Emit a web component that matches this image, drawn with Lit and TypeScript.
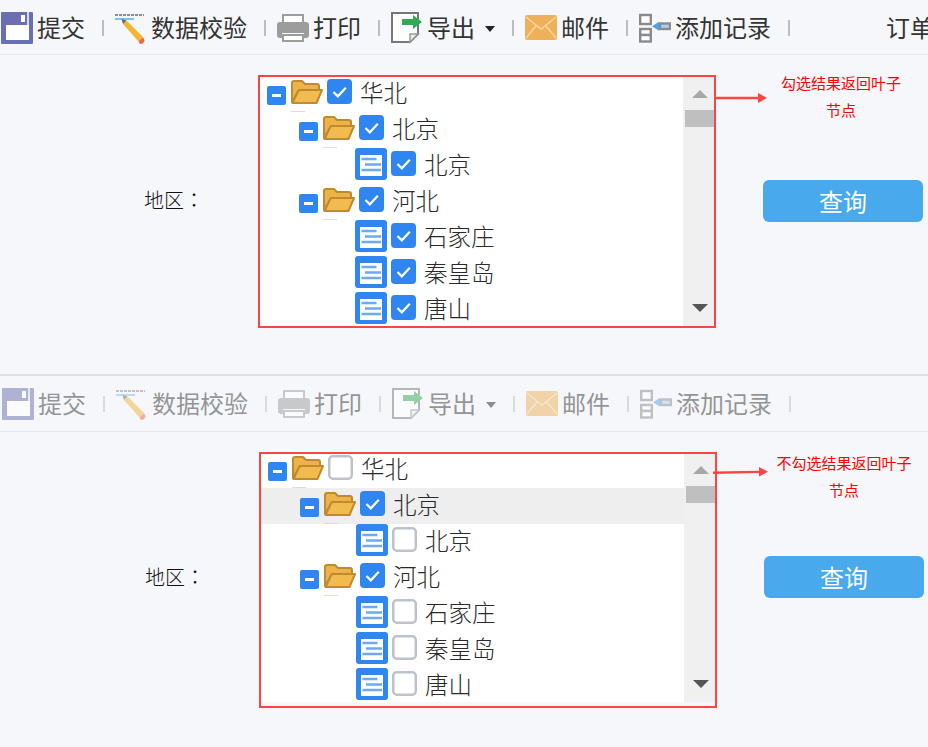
import { LitElement, html, css, svg } from "lit";
import { customElement, property } from "lit/decorators.js";

@customElement("app-root")
export class AppRoot extends LitElement {
  static styles = css`
    :host { display: block; width: 928px; height: 747px; overflow: hidden; background: #f6f7fa; font-family: "Noto Sans CJK SC", sans-serif; }
  `;
  render() {
    return html`<demo-panel variant="first"></demo-panel><demo-panel variant="second"></demo-panel>`;
  }
}

type Row = { level: number; text: string; leaf?: boolean; checked: boolean; hot?: boolean };

@customElement("demo-panel")
export class DemoPanel extends LitElement {
  @property({ reflect: true }) variant = "first";

  static styles = css`
    :host { display: block; position: relative; font-family: "Noto Sans CJK SC", sans-serif; }
    :host([variant="first"]) { height: 374px; border-bottom: 2px solid #dedfe1; }
    :host([variant="second"]) { height: 371px; }

    .toolbar { display: flex; align-items: flex-start; height: 54px; padding-left: 1px; overflow: hidden; border-bottom: 1px solid #e6e7e9; white-space: nowrap; font-size: 24px; color: #333; }
    :host([variant="second"]) .toolbar { height: 55px; padding-left: 2px; }
    .tool { display: flex; align-items: flex-start; padding-top: 12px; }
    :host([variant="second"]) .tool > *, :host([variant="second"]) .sep { opacity: 0.5; }
    .tool span { margin-left: 4px; line-height: 30px; height: 32px; }
    .tool svg { display: block; flex: none; }
    .mail { margin-top: 3px; }
    .caret { width: 0; height: 0; margin: 14px 0.5px 0 9.5px; border-left: 5.5px solid transparent; border-right: 5.5px solid transparent; border-top: 6px solid #222; }
    .sep { width: 2px; height: 16px; margin: 20px 11px 0 17px; background: #bdbdbd; flex: none; }
    .order { margin: 11px 0 0 85px; line-height: 32px; color: #333; }

    .body { display: flex; align-items: flex-start; padding: 21px 0 0 144px; }
    :host([variant="second"]) .body { padding: 20px 0 0 145px; }
    .label { width: 115px; margin-top: 108px; font-family: "Noto Sans CJK TC", sans-serif; font-size: 20px; line-height: 32px; color: #111; font-weight: 300; }
    :host([variant="second"]) .label { margin-top: 109px; }

    .tree { position: relative; width: 456px; height: 250px; display: flex; background: #fff; flex: none; }
    .frame { position: absolute; left: -1px; right: -1px; top: -1px; bottom: -2px; border: 2px solid #fb4444; pointer-events: none; }
    :host([variant="second"]) .frame { top: 0; bottom: -6px; }
    .rows { flex: 1; min-width: 0; overflow: hidden; }
    .row { display: flex; align-items: flex-start; height: 36px; box-sizing: border-box; padding-left: 8px; position: relative; }
    .row.hot { background: #eee; }
    .row.l1 { padding-left: 40px; }
    .row.l2 { padding-left: 96px; }
    .exp { width: 19px; height: 19px; margin: 10px 5px 0 0; border-radius: 2px; background: #2f86f0; position: relative; flex: none; }
    .exp::after { content: ""; position: absolute; left: 5px; right: 5px; top: 8px; height: 3px; background: #fff; }
    .folder { display: block; width: 32px; height: 24px; margin-top: 4px; flex: none; }
    .tick { position: absolute; top: 35px; width: 14px; height: 1px; background: #e6dccd; }
    .box { width: 25px; height: 25px; margin: 3px 0 0 4px; flex: none; display: block; }
    .leaf { display: block; width: 32px; height: 32px; flex: none; }
    .text { margin-left: 8px; font-size: 23.5px; line-height: 32px; color: #2a2a2a; font-weight: 300; }

    .scroll { width: 32px; flex: none; background: #f0f0f0; position: relative; display: flex; flex-direction: column; align-items: flex-end; }
    .up { width: 0; height: 0; margin: 14px 7px 0 0; border-left: 8px solid transparent; border-right: 8px solid transparent; border-bottom: 8px solid #a8a8a8; }
    .thumb { width: 30px; height: 17px; margin-top: 12px; background: #bfbfbf; }
    .down { width: 0; height: 0; margin: 177px 7px 0 0; border-left: 8px solid transparent; border-right: 8px solid transparent; border-top: 8px solid #555; }

    .side { width: 160px; margin-left: 48px; flex: none; display: flex; flex-direction: column; align-items: center; }
    .note { height: 111px; margin-top: -7px; padding-right: 4px; font-size: 15px; line-height: 27px; color: #f00; text-align: center; white-space: nowrap; font-weight: 400; }
    :host([variant="second"]) .note { height: 107px; margin-top: -3px; padding-right: 0; }
    .btn { width: 160px; height: 42px; border-radius: 6px; background: #48a9ec; color: #fff; font-size: 24px; line-height: 42px; text-align: center; }
    .arrow { position: absolute; left: 700px; top: 0; overflow: visible; }
  `;

  tool(icon: unknown, text: string, caret = false) {
    return html`<div class="tool">${icon}<span>${text}</span>${caret ? html`<i class="caret"></i>` : ""}</div><div class="sep"></div>`;
  }

  box(on: boolean) {
    return on
      ? html`<svg class="box" viewBox="0 0 25 25"><rect width="25" height="25" rx="4" fill="#2f86f0"/><path d="M6.5 13l4.3 4.3 8-8.6" fill="none" stroke="#fff" stroke-width="2.2"/></svg>`
      : html`<svg class="box" viewBox="0 0 25 25"><rect x="1.25" y="1.25" width="22.5" height="22.5" rx="3.5" fill="#fff" stroke="#bcc3ca" stroke-width="2.5"/></svg>`;
  }

  row(r: Row) {
    const folder = html`<svg class="folder" viewBox="0 0 32 24"><path d="M1 22V3Q1 1 3 1h8l3 3h12q2 0 2 2v4H8L1 22z" fill="#eeb24a" stroke="#c08a2e" stroke-width="2" stroke-linejoin="round"/><path d="M1.5 23L7 11.5Q7.5 10 9 10h22l-5.5 13z" fill="#f2bb50" stroke="#c08a2e" stroke-width="2" stroke-linejoin="round"/></svg>`;
    const leaf = html`<svg class="leaf" viewBox="0 0 32 32"><rect width="32" height="32" rx="3" fill="#2f86f0"/><rect x="5" y="7" width="22" height="21" fill="#fff"/><path d="M6.5 11h15M10 16.5h16M6.5 22h19.5" stroke="#6fa9f3" stroke-width="2.4"/></svg>`;
    return html`<div class="row l${r.level} ${r.hot ? "hot" : ""}">
      ${r.leaf ? leaf : html`<div class="exp"></div>${folder}<i class="tick" style="left:${r.level ? 64 : 32}px"></i>`}
      ${this.box(r.checked)}
      <span class="text">${r.text}</span>
    </div>`;
  }

  render() {
    const first = this.variant === "first";
    const rows: Row[] = [
      { level: 0, text: "华北", checked: first },
      { level: 1, text: "北京", checked: true, hot: !first },
      { level: 2, text: "北京", leaf: true, checked: first },
      { level: 1, text: "河北", checked: true },
      { level: 2, text: "石家庄", leaf: true, checked: first },
      { level: 2, text: "秦皇岛", leaf: true, checked: first },
      { level: 2, text: "唐山", leaf: true, checked: first },
    ];
    const save = svg`<svg width="32" height="32" viewBox="0 0 32 32"><rect width="32" height="32" rx="1" fill="#6a6fb1"/><rect x="5" y="13" width="23" height="15" fill="#fff"/><rect x="20" y="3" width="4" height="7" fill="#fff"/><rect x="26" y="0" width="2" height="13" fill="#d9daea"/></svg>`;
    const check = svg`<svg width="32" height="32" viewBox="0 0 32 32"><path d="M0 3h29" stroke="#8d8d8d" stroke-width="2" stroke-dasharray="3 1"/><path d="M0 7h19" stroke="#7cc0f4" stroke-width="2"/><path d="M8 12l3.5-3.5L28 25l-4.5 4.5z" fill="#f2b632"/><path d="M8 12l3.5-3.5-5-1.5z" fill="#666"/><path d="M23.5 29.5L28 25l1.5 3.5-1.5 3-3 .5z" fill="#f0674a"/></svg>`;
    const printer = svg`<svg width="32" height="32" viewBox="0 0 32 32"><rect x="6" y="3" width="20" height="8" fill="#fff" stroke="#9c9c9c" stroke-width="2"/><path d="M3 10h26q3 0 3 3v10q0 3-3 3h-2v-5H5v5H3q-3 0-3-3V13q0-3 3-3z" fill="#9c9c9c"/><rect x="6" y="23" width="20" height="6" fill="#fff" stroke="#9c9c9c" stroke-width="2"/></svg>`;
    const exportIcon = svg`<svg width="32" height="32" viewBox="0 0 32 32"><path d="M1 1h26v21l-8 8H1z" fill="#fff" stroke="#777" stroke-width="2"/><path d="M27 22h-8v8z" fill="#eee" stroke="#999" stroke-width="1.5"/><path d="M11 7h11V3l9 7-9 7v-4H11z" fill="#34a853"/></svg>`;
    const mail = svg`<svg class="mail" width="32" height="25" viewBox="0 0 32 25"><rect width="32" height="25" rx="2" fill="#eeb159"/><path d="M1 2l15 12L31 2M1 23l10-12M31 23L21 11" fill="none" stroke="#f6d6a4" stroke-width="1.4"/></svg>`;
    const addIcon = svg`<svg width="32" height="32" viewBox="0 0 32 32"><g fill="#fff" stroke="#8a8a8a" stroke-width="2.4"><rect x="1.2" y="3" width="10.6" height="9"/><rect x="1.2" y="17" width="10.6" height="6"/><rect x="1.2" y="23" width="10.6" height="6.5"/><rect x="21" y="11.5" width="10" height="5.5" fill="#a8d0f2"/></g><path d="M13 14.2l7-4.5v9z" fill="#4aa3ec"/></svg>`;

    return html`
      <div class="toolbar">
        ${this.tool(save, "提交")}
        ${this.tool(check, "数据校验")}
        ${this.tool(printer, "打印")}
        ${this.tool(exportIcon, "导出", true)}
        ${this.tool(mail, "邮件")}
        ${this.tool(addIcon, "添加记录")}
        ${first ? html`<div class="order">订单</div>` : ""}
      </div>
      <div class="body">
        <div class="label">地区：</div>
        <div class="tree">
          <div class="rows">${rows.map((r) => this.row(r))}</div>
          <div class="scroll"><i class="up"></i><i class="thumb"></i><i class="down"></i></div>
          <div class="frame"></div>
        </div>
        <div class="side">
          ${first
            ? html`<div class="note">勾选结果返回叶子<br />节点</div>`
            : html`<div class="note">不勾选结果返回叶子<br />节点</div>`}
          <div class="btn">查询</div>
        </div>
      </div>
      ${first
        ? html`<svg class="arrow" width="80" height="120"><path d="M16 98H60" stroke="#fb4444" stroke-width="2.4"/><path d="M58 93l9 5-9 5z" fill="#fb4444"/></svg>`
        : html`<svg class="arrow" width="80" height="120"><path d="M13 96.7L60 95.9" stroke="#fb4444" stroke-width="2.4"/><path d="M59 91l9 4.8-9 4.8z" fill="#fb4444"/></svg>`}
    `;
  }
}
